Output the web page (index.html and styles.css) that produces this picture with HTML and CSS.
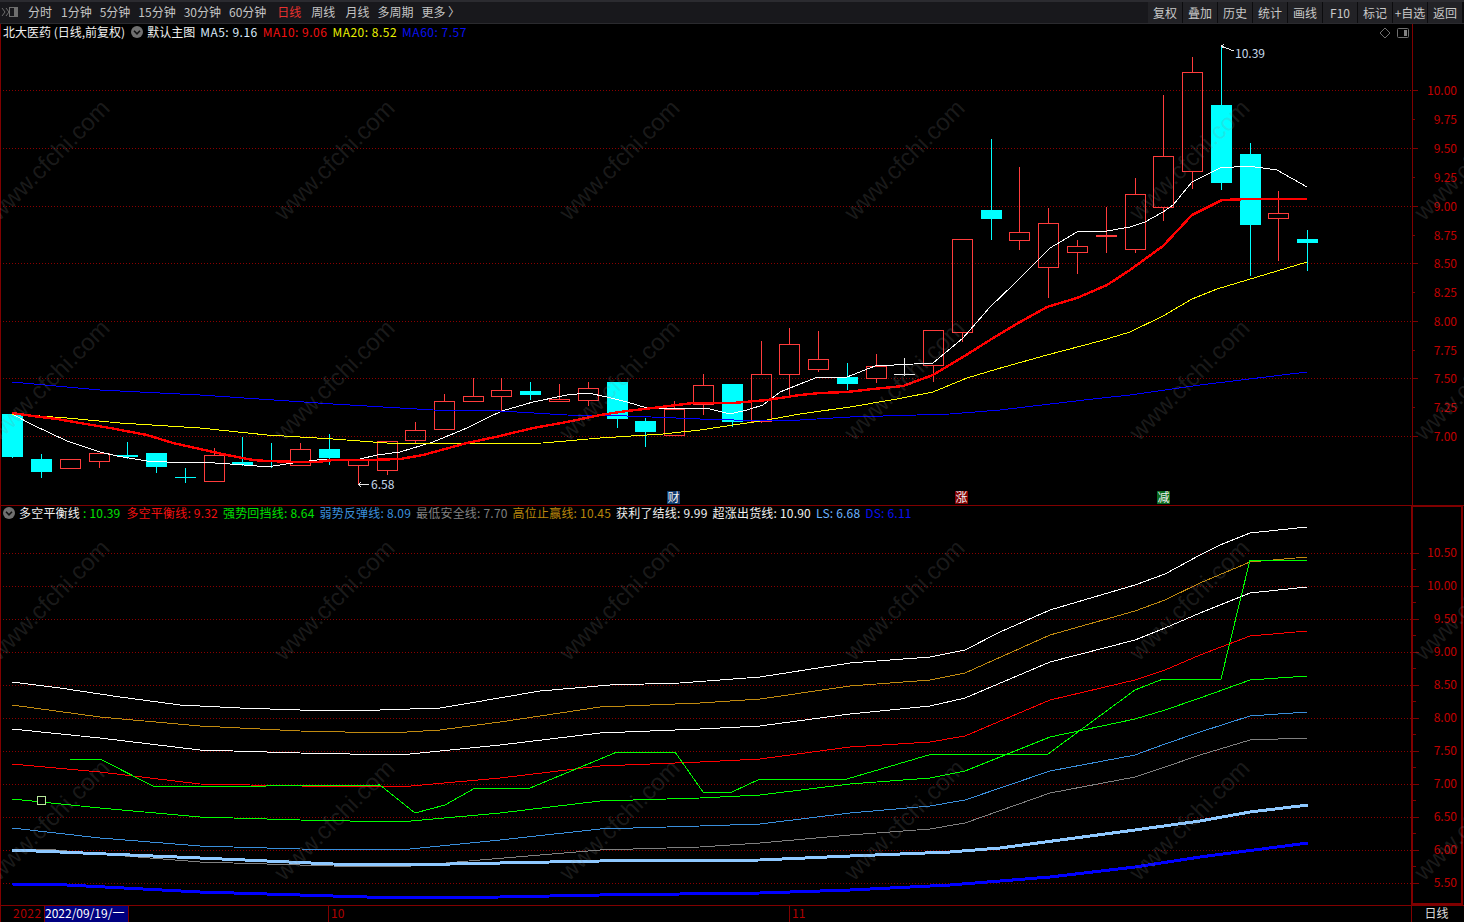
FILE: index.html
```html
<!DOCTYPE html>
<html lang="zh-CN">
<head>
<meta charset="utf-8">
<title>北大医药 K线</title>
<link rel="stylesheet" href="styles.css">
</head>
<body>
<div class="app">
  <header class="toolbar">
    <svg class="tb-icon" width="17" height="12" viewBox="0 0 17 12"><path class="tb-chev" d="M1 2l3 4-3 4M5 2l3 4-3 4"/><rect class="tb-box" x="8.5" y="1.5" width="8" height="9"/><rect class="tb-fill" x="13" y="2" width="3" height="8"/></svg>
    <nav class="periods">
      <span class="wide">分时</span><span>1分钟</span><span>5分钟</span><span>15分钟</span><span>30分钟</span><span>60分钟</span><span class="active wide">日线</span><span class="wide">周线</span><span class="wide">月线</span><span class="multi">多周期</span><span>更多 〉</span>
    </nav>
    <div class="tools">
      <button>复权</button><button>叠加</button><button>历史</button><button>统计</button><button>画线</button><button>F10</button><button>标记</button><button>+自选</button><button>返回</button>
    </div>
  </header>

  <section class="pane pane-main">
    <div class="legend legend-main">
      <span class="white">北大医药 (日线,前复权)</span>
      <svg class="toggle" width="12" height="12" viewBox="0 0 12 12"><circle cx="6" cy="6" r="6"/><path d="M3 4.8l3 3 3-3"/></svg>
      <span class="white cn">默认主图</span>
      <span class="pale">MA5: 9.16</span>
      <span class="red">MA10: 9.06</span>
      <span class="yellow">MA20: 8.52</span>
      <span class="blue">MA60: 7.57</span>
    </div>
    <div class="corner-icons">
      <svg width="12" height="12" viewBox="0 0 12 12"><path class="ci-line" d="M6 1l5 5-5 5-5-5z"/></svg>
      <svg width="12" height="12" viewBox="0 0 12 12"><rect class="ci-line" x=".5" y="1.5" width="11" height="9" rx="1"/><rect class="ci-fill" x="7" y="3" width="3" height="6"/></svg>
    </div>
    <svg class="plot" width="1464" height="481" viewBox="0 24 1464 481">
      <path class="axis" d="M.5 24V505"/>
      <g class="grid">
        <path d="M0 90.5H1412M0 148.5H1412M0 206.5H1412M0 263.5H1412M0 321.5H1412M0 378.5H1412M0 436.5H1412"/>
      </g>
      <path class="axis" d="M1412.5 24V505M1412 90.5h6M1412 119.5h3M1412 148.5h6M1412 177.5h3M1412 206.5h6M1412 235.5h3M1412 263.5h6M1412 292.5h3M1412 321.5h6M1412 350.5h3M1412 378.5h6M1412 407.5h3M1412 436.5h6"/>
      <g class="ticks">
        <text x="1457" y="95">10.00</text><text x="1457" y="124">9.75</text><text x="1457" y="153">9.50</text><text x="1457" y="182">9.25</text><text x="1457" y="211">9.00</text><text x="1457" y="240">8.75</text><text x="1457" y="268">8.50</text><text x="1457" y="297">8.25</text><text x="1457" y="326">8.00</text><text x="1457" y="355">7.75</text><text x="1457" y="383">7.50</text><text x="1457" y="412">7.25</text><text x="1457" y="441">7.00</text>
      </g>

      <path class="candle-up" d="M60.5 459.5H80.5V468.5H60.5ZM99.5 468V461M89.5 453.5H109.5V461.5H89.5ZM214.5 448V455M204.5 455.5H224.5V481.5H204.5ZM300.5 443V449M290.5 449.5H310.5V465.5H290.5ZM358.5 465V484M348.5 460.5H368.5V465.5H348.5ZM387.5 470V475M377.5 441.5H397.5V470.5H377.5ZM415.5 422V430M415.5 440V444M405.5 430.5H425.5V440.5H405.5ZM444.5 394V401M434.5 401.5H454.5V429.5H434.5ZM473.5 378V396M463.5 396.5H483.5V401.5H463.5ZM501.5 378V390M501.5 396V411M491.5 390.5H511.5V396.5H491.5ZM559.5 384V400M549.5 399.5H569.5V401.5H549.5ZM588.5 382V388M588.5 400V406M578.5 388.5H598.5V400.5H578.5ZM674.5 401V409M664.5 409.5H684.5V435.5H664.5ZM703.5 374V385M703.5 404V415M693.5 385.5H713.5V404.5H693.5ZM761.5 341V374M761.5 421V423M751.5 374.5H771.5V421.5H751.5ZM789.5 328V344M789.5 374V397M779.5 344.5H799.5V374.5H779.5ZM818.5 331V359M818.5 369V372M808.5 359.5H828.5V369.5H808.5ZM876.5 354V366M876.5 378V383M866.5 366.5H886.5V378.5H866.5ZM933.5 365V382M923.5 330.5H943.5V365.5H923.5ZM962.5 332V342M952.5 239.5H972.5V332.5H952.5ZM1019.5 167V232M1019.5 240V250M1009.5 232.5H1029.5V240.5H1009.5ZM1048.5 208V223M1048.5 267V298M1038.5 223.5H1058.5V267.5H1038.5ZM1077.5 240V246M1077.5 252V274M1067.5 246.5H1087.5V252.5H1067.5ZM1106.5 207V235M1106.5 237V253M1096.5 235.5H1116.5V236.5H1096.5ZM1135.5 178V194M1135.5 249V253M1125.5 194.5H1145.5V249.5H1125.5ZM1163.5 95V156M1163.5 207V221M1153.5 156.5H1173.5V207.5H1153.5ZM1192.5 57V72M1192.5 171V189M1182.5 72.5H1202.5V171.5H1182.5ZM1278.5 191V213M1278.5 218V261M1268.5 213.5H1288.5V218.5H1268.5Z"/>
      <path class="wick-dn" d="M12.5 457V458M41.5 454V478M127.5 442V459M156.5 467V473M185.5 468V483M175 477.5H196M242.5 437V466M271.5 443V468M329.5 434V465M530.5 382V400M617.5 419V428M645.5 418V447M732.5 422V427M847.5 363V390M991.5 139V240M1221.5 46V190M1250.5 143V276M1307.5 230V271"/>
      <path class="body-dn" d="M2 414H23V457H2ZM31 459H52V472H31ZM117 455H138V457H117ZM146 453H167V467H146ZM232 462H253V465H232ZM261 460H282V462H261ZM319 449H340V458H319ZM520 391H541V395H520ZM607 382H628V419H607ZM635 421H656V432H635ZM722 384H743V422H722ZM837 377H858V384H837ZM981 210H1002V219H981ZM1211 105H1232V183H1211ZM1240 154H1261V225H1240ZM1297 239H1318V243H1297Z"/>
      <path class="wick-flat" d="M904.5 358V376M894 374.5H915"/>

      <polyline class="ln white-ln" points="12,414 33,425 67,441 100,452 117,456 147,461 167,462 200,462 230,464 257,466 273,466 293,463 317,460 340,459 360,459 377,455 400,452 433,442 467,428 487,418 502,411 533,402 567,395 588,393 607,397 627,402 647,408 667,409 693,408 710,409 730,414 747,410 763,405 780,392 800,384 818,377 847,377 875,366 933,363 963,338 990,307 1013,285 1050,248 1077,232 1107,231 1130,227 1145,222 1163,212 1173,205 1192,182 1220,168 1248,166 1277,170 1307,187"/>
      <polyline class="ln yellow-ln" points="12,414 67,418 120,423 200,428 267,435 333,439 400,444 543,443 600,438 663,434 700,430 767,420 800,414 850,407 897,399 933,392 967,378 997,369 1047,355 1100,341 1130,332 1163,316 1192,299 1217,289 1307,262"/>
      <polyline class="ln blue-ln" points="12,382 100,390 200,395 333,404 400,408 433,410 500,411 567,415 627,416 700,419 767,421 800,420 850,417 950,414 1000,410 1050,404 1093,399 1130,395 1200,385 1307,372"/>
      <polyline class="ln red-ln" points="12,413 33,416 57,419 80,423 110,428 147,435 173,443 200,449 227,455 253,460 267,461 300,462 317,462 333,460 367,460 400,459 423,455 467,443 500,436 533,428 567,422 600,415 627,411 653,408 693,403 733,403 767,400 800,395 820,393 847,392 873,389 903,386 933,375 963,357 990,340 1020,322 1047,307 1077,298 1107,285 1130,270 1163,246 1192,215 1222,200 1250,199 1307,199"/>

      <g class="annot">
        <path d="M1221.5 46l12 5M1221 46l3-1.500M1221 46l3 2"/>
        <text x="1235" y="58">10.39</text>
        <path d="M358 484.500h11M358 484.500l3-2M358 484.500l3 2"/>
        <text x="371" y="489">6.58</text>
      </g>

      <g class="markers">
        <rect class="m-cai" x="667" y="491" width="13" height="13"/><text x="673.500" y="502">财</text>
        <rect class="m-zhang" x="955" y="491" width="13" height="13"/><text x="961.500" y="502">涨</text>
        <rect class="m-jian" x="1157" y="491" width="13" height="13"/><text x="1163.500" y="502">减</text>
      </g>
    </svg>
  </section>

  <section class="pane pane-sub">
    <div class="legend legend-sub">
      <svg class="toggle" width="12" height="12" viewBox="0 0 12 12"><circle cx="6" cy="6" r="6"/><path d="M3 4.800l3 3 3-3"/></svg>
      <span class="white name">多空平衡线</span>
      <span class="green value">: 10.39</span>
      <span class="red">多空平衡线: 9.32</span>
      <span class="green">强势回挡线: 8.64</span>
      <span class="sky">弱势反弹线: 8.09</span>
      <span class="grey">最低安全线: 7.70</span>
      <span class="amber">高位止赢线: 10.45</span>
      <span class="white">获利了结线: 9.99</span>
      <span class="white">超涨出货线: 10.90</span>
      <span class="ls">LS: 6.68</span>
      <span class="blue">DS: 6.11</span>
    </div>
    <svg class="plot" width="1464" height="400" viewBox="0 506 1464 400">
      <path class="axis" d="M.5 506V905"/>
      <path class="grid-path" d="M0 553.500H1412M0 586.500H1412M0 619.500H1412M0 652.500H1412M0 685.500H1412M0 718.500H1412M0 751.500H1412M0 784.500H1412M0 817.500H1412M0 850.500H1412M0 883.500H1412"/>
      <rect class="axis-box" x="1412" y="506" width="50" height="398"/>
      <path class="axis" d="M1413 553.500h6M1413 569.500h3M1413 586.500h6M1413 602.500h3M1413 619.500h6M1413 635.500h3M1413 652.500h6M1413 668.500h3M1413 685.500h6M1413 701.500h3M1413 718.500h6M1413 734.500h3M1413 751.500h6M1413 767.500h3M1413 784.500h6M1413 800.500h3M1413 817.500h6M1413 833.500h3M1413 850.500h6M1413 866.500h3M1413 883.500h6"/>
      <g class="ticks">
        <text x="1457" y="557">10.50</text><text x="1457" y="590">10.00</text><text x="1457" y="623">9.50</text><text x="1457" y="656">9.00</text><text x="1457" y="689">8.50</text><text x="1457" y="722">8.00</text><text x="1457" y="755">7.50</text><text x="1457" y="788">7.00</text><text x="1457" y="821">6.50</text><text x="1457" y="854">6.00</text><text x="1457" y="887">5.50</text>
      </g>
      <polyline class="ln white-ln" points="12,682 60,688 120,697 180,705 240,708 300,710 380,710 440,708 470,703 540,691 610,685 680,683 760,677 850,663 930,657 965,650 1000,632 1050,610 1135,585 1165,574 1200,555 1220,545 1250,533 1307,527"/>
      <polyline class="ln amber-ln" points="12,705 100,717 200,726 300,731 390,733 440,730 500,722 600,707 700,703 760,699 850,686 930,680 965,673 1050,635 1135,611 1165,600 1200,583 1250,562 1307,557"/>
      <polyline class="ln white-ln" points="12,729 100,738 200,750 300,753 400,755 500,745 600,733 700,729 760,726 850,714 930,706 965,698 1050,662 1135,640 1165,628 1200,613 1250,593 1307,587"/>
      <polyline class="ln pure-red-ln" points="12,764 100,772 200,784 300,786 400,787 500,778 600,766 700,762 760,759 850,747 930,742 965,736 1050,700 1135,680 1165,670 1200,655 1250,636 1307,631"/>
      <polyline class="ln green-ln" points="12,799 100,808 200,817 300,820 400,822 500,813 600,801 700,798 760,795 850,784 930,778 965,771 1050,737 1135,719 1165,710 1200,698 1250,680 1307,676"/>
      <polyline class="ln sky-ln" points="12,828 100,838 200,846 300,849 400,850 500,840 600,829 700,826 760,824 850,813 930,806 965,800 1050,771 1135,755 1165,744 1200,732 1250,716 1307,712"/>
      <polyline class="ln grey-ln" points="12,849 45,849 100,854 200,862 333,866 400,867 480,860 600,850 700,847 760,843 850,835 930,829 965,823 1050,793 1135,777 1165,767 1200,755 1250,740 1307,738"/>
      <polyline class="ln green-ln" points="70,760 100,759 155,787 380,785 415,813 445,805 475,788 530,788 617,752 675,752 703,792 732,792 760,779 847,779 932,754 1048,754 1135,690 1163,679 1221,679 1250,560 1307,560"/>
      <polyline class="ln ls-ln" points="12,850 83,853 200,858 333,864 400,865 600,861 760,860 850,856 950,852 1000,848 1135,830 1200,821 1250,812 1308,805"/>
      <polyline class="ln ds-ln" points="12,884 67,885 200,892 333,896 400,898 500,897 600,895 760,893 850,890 950,885 1050,877 1135,867 1200,857 1308,843"/>
      <rect class="point" x="37.500" y="796.500" width="8" height="8"/>
    </svg>
  </section>

  <footer class="dates">
    <span class="d-year">2022</span>
    <span class="d-cursor">2022/09/19/一</span>
    <span class="d-gap"></span>
    <span class="d-month d-oct">10</span>
    <span class="d-month d-nov">11</span>
    <span class="d-period">日线</span>
  </footer>

  <div class="watermark" aria-hidden="true">
    <span>www.cfchi.com</span><span>www.cfchi.com</span><span>www.cfchi.com</span><span>www.cfchi.com</span><span>www.cfchi.com</span><span>www.cfchi.com</span>
    <span>www.cfchi.com</span><span>www.cfchi.com</span><span>www.cfchi.com</span><span>www.cfchi.com</span><span>www.cfchi.com</span><span>www.cfchi.com</span>
    <span>www.cfchi.com</span><span>www.cfchi.com</span><span>www.cfchi.com</span><span>www.cfchi.com</span><span>www.cfchi.com</span><span>www.cfchi.com</span>
    <span>www.cfchi.com</span><span>www.cfchi.com</span><span>www.cfchi.com</span><span>www.cfchi.com</span><span>www.cfchi.com</span><span>www.cfchi.com</span>
  </div>
</div>
</body>
</html>
```
FILE: styles.css
```css
* { box-sizing: border-box; }
html, body { margin: 0; height: 100%; background: #000; overflow: hidden; }
body { font: 12px/16px "Noto Sans CJK SC", "Liberation Sans", sans-serif; color: #ddd; }

.app { position: relative; width: 1464px; height: 922px; display: flex; flex-direction: column; overflow: hidden; background: #000; }

.toolbar { height: 24px; flex: none; display: flex; align-items: stretch; background: #18181c; border-top: 2px solid #2b2b30; border-bottom: 1px solid #2a2a2e; }
.tb-icon { flex: none; margin: 4px 0 0 1px; }
.tb-chev { fill: none; stroke: #6e6e6e; stroke-width: 1; }
.tb-box { fill: none; stroke: #6e6e6e; }
.tb-fill { fill: #6e6e6e; }
.periods { display: flex; gap: 8px; margin-left: 9px; line-height: 20px; color: #c4c4c4; white-space: nowrap; }
.periods .wide { padding: 0 1px; }
.periods .active { color: #e8312f; margin-left: 2px; }
.periods .multi { margin-left: -1px; }
.tools { margin-left: auto; padding-right: 2px; display: flex; gap: 1px; background: #0c0c0e; }
.tools button { width: 34px; padding: 0; border: 0; background: #222226; color: #c8c8c8; font: inherit; line-height: 20px; white-space: nowrap; overflow: hidden; }

.pane { position: relative; flex: none; border-bottom: 1px solid #800000; }
.pane-main { height: 482px; }
.pane-sub { height: 400px; }
.plot { display: block; shape-rendering: crispEdges; }

.legend { position: absolute; z-index: 2; left: 3px; top: 0; height: 16px; display: flex; align-items: center; gap: 5px; white-space: nowrap; font-variant-numeric: tabular-nums; }
.legend-main span { letter-spacing: .5px; }
.legend-main span:first-child { letter-spacing: 0; }
.legend-main .cn { letter-spacing: 0; margin-left: -1px; }
.legend-main .toggle { margin-left: 1px; }
.legend-sub { top: -1px; letter-spacing: .2px; }
.legend-sub .name { margin-right: -2px; margin-left: -1px; }
.legend-sub .value { margin-right: 1px; }
.toggle { flex: none; }
.toggle circle { fill: #707070; }
.toggle path { fill: none; stroke: #111; stroke-width: 1.6; }
.white { color: #f0f0f0; }
.pale { color: #d8e8f8; }
.red { color: #f01010; }
.yellow { color: #e8f000; }
.blue { color: #0a10f0; }
.green { color: #00e000; }
.sky { color: #3a8fdc; }
.grey { color: #808080; }
.amber { color: #b8860b; }
.ls { color: #6cb4ff; }

.corner-icons { position: absolute; z-index: 2; right: 55px; top: 3px; display: flex; gap: 6px; }
.ci-line { fill: none; stroke: #707070; }
.ci-fill { fill: #808080; }

.grid path, .grid-path { fill: none; stroke: #8a0000; stroke-dasharray: 1 2; }
.axis { fill: none; stroke: #800000; }
.axis-box { fill: none; stroke: #800000; stroke-width: 2; }
.ticks text { fill: #c00000; text-anchor: end; font-size: 12px; shape-rendering: auto; }

.candle-up { fill: none; stroke: #ff3c3c; }
.wick-dn { fill: none; stroke: #00ffff; }
.body-dn { fill: #00ffff; }
.wick-flat { fill: none; stroke: #f0f0f0; }
.ln { fill: none; stroke-width: 1; }
.white-ln { stroke: #fff; }
.yellow-ln { stroke: #ffff00; }
.blue-ln { stroke: #0000ff; }
.red-ln { stroke: #ff0000; stroke-width: 2.4; }
.pure-red-ln { stroke: #ff0000; }
.amber-ln { stroke: #c08a10; }
.green-ln { stroke: #00ff00; }
.sky-ln { stroke: #3a8fdc; }
.grey-ln { stroke: #808080; }
.ls-ln { stroke: #8ec8ff; stroke-width: 3; }
.ds-ln { stroke: #0000ff; stroke-width: 3; }
.point { fill: #000; stroke: #b8e89a; }

.annot path { fill: none; stroke: #e8e8e8; }
.annot text { fill: #c6d8ea; font-size: 12px; }
.markers text { fill: #f0f0f0; font-size: 12px; text-anchor: middle; }
.m-cai { fill: #0f3a6e; }
.m-zhang { fill: #800000; }
.m-jian { fill: #0a6a1e; }

.dates { flex: 1; display: flex; align-items: center; color: #b00000; line-height: 16px; margin-top: -1px; border-left: 1px solid #800000; }
.dates span { align-self: stretch; }
.d-year { width: 44px; padding-left: 12px; white-space: nowrap; letter-spacing: .5px; border-right: 1px solid #800000; }
.d-cursor { width: 84px; background: #000080; color: #fff; white-space: nowrap; border-right: 1px solid #800000; }
.d-gap { width: 199px; }
.d-month { padding-left: 2px; border-left: 1px solid #800000; }
.d-oct { width: 461px; }
.d-nov { width: 622px; }
.d-period { flex: 1; text-align: center; padding-right: 3px; color: #ddd; border-left: 1px solid #800000; }

.watermark { position: absolute; z-index: 3; left: -93px; top: 50px; display: grid; grid-template-columns: repeat(6, 285px); grid-auto-rows: 220px; pointer-events: none; }
.watermark span { display: flex; align-items: center; justify-content: center; transform: rotate(-45deg); font: 24px "Liberation Sans", sans-serif; color: rgba(136, 136, 136, .2); white-space: nowrap; }
```
